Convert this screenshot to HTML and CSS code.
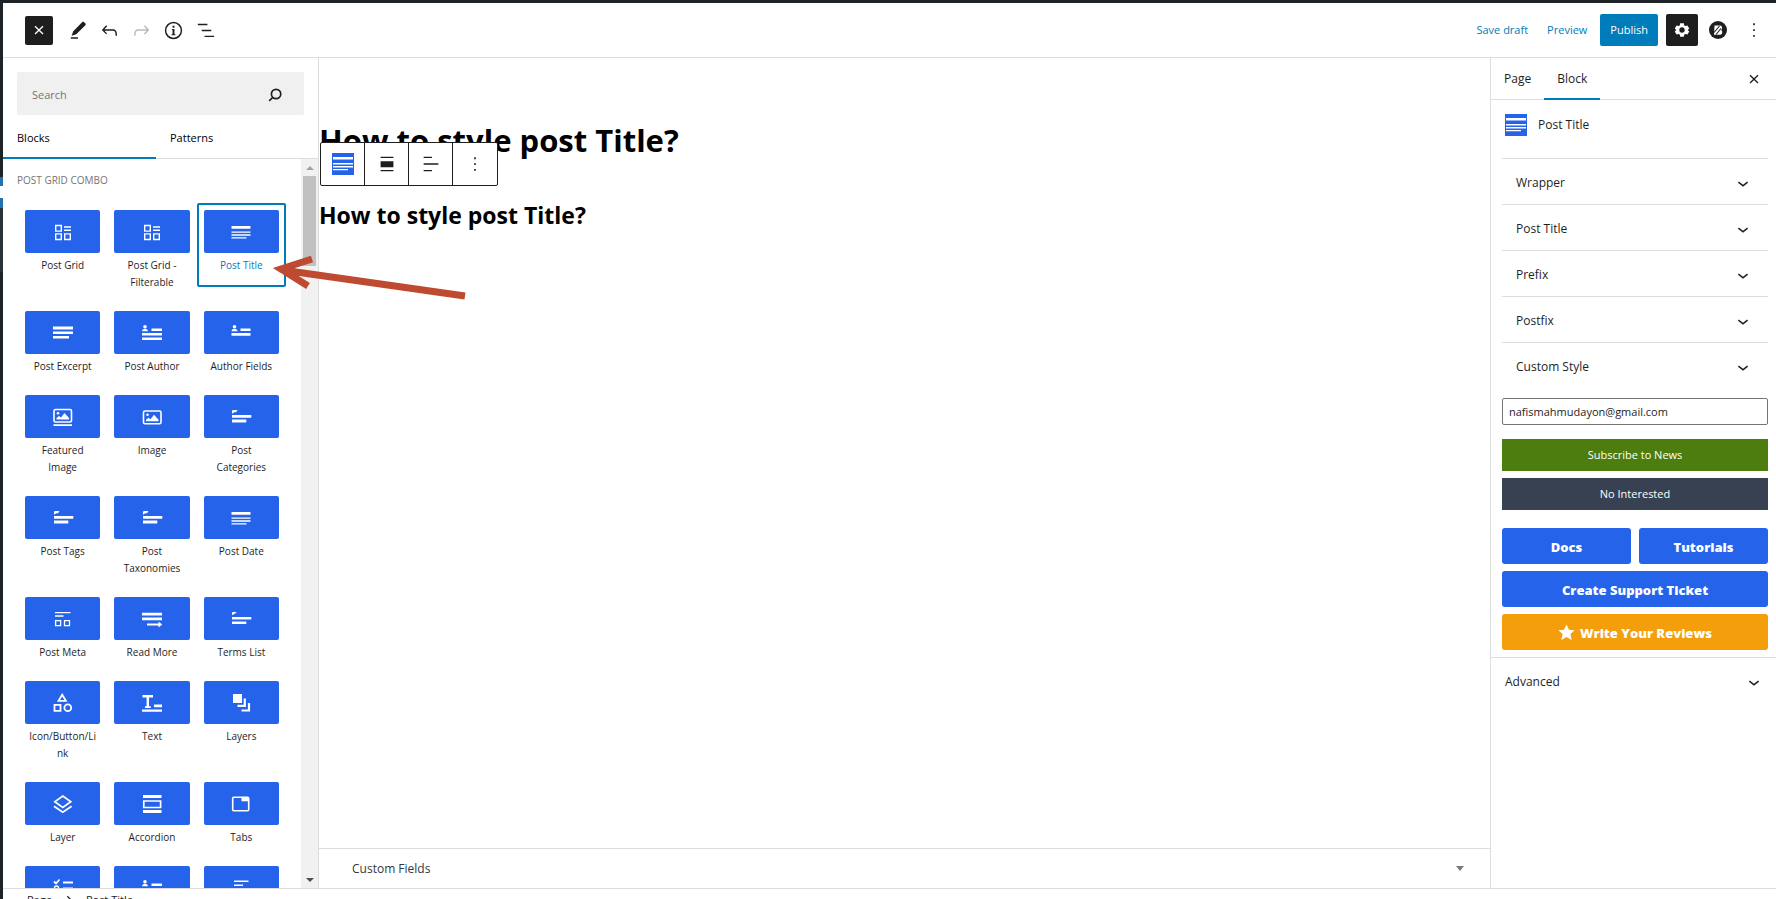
FILE: index.html
```html
<!DOCTYPE html>
<html lang="en">
<head>
<meta charset="utf-8">
<title>Edit Page</title>
<link rel="stylesheet" href="styles.css">
</head>
<body>
<svg class="defs" aria-hidden="true">
  <symbol id="post-grid" viewBox="0 0 24 24"><g fill="none" stroke="currentColor" stroke-width="1.4"><path d="M4.7 5.5h5.6v5.6H4.7zM4.7 13.900h5.6v5.6H4.7zM13.700 13.900h5.6v5.6h-5.6zM13 7h7M13 10.300h7"/></g></symbol>
  <symbol id="post-title" viewBox="0 0 24 24"><path fill="currentColor" d="M2.500 6h19v2.700h-19zM2.500 11.500h19v1.300h-19zM2.500 14.300h19v1.400h-19zM2.500 17.300h15v1.200h-15z"/></symbol>
  <symbol id="title-chip" viewBox="0 0 22 22"><path fill="currentColor" d="M1 4h20v2.500H1zM1 10h20v1.500H1zM1 13h20v1.500H1zM1 16h15v1.200H1z"/></symbol>
  <symbol id="lines" viewBox="0 0 24 24"><path fill="currentColor" d="M2 5.500h20v3H2zM2 10.500h20V13H2zM2 15h16v2.600H2z"/></symbol>
  <symbol id="author" viewBox="0 0 24 24"><circle cx="5" cy="5.700" r="1.800" fill="currentColor"/><path fill="currentColor" d="M2 10.300q.2-2.600 3-2.600t3 2.600zM11.500 7.500H22V10H11.500zM2 12h20v2.400H2zM2 16.500h20V19H2z"/></symbol>
  <symbol id="fields" viewBox="0 0 24 24"><circle cx="5.500" cy="5.700" r="1.800" fill="currentColor"/><path fill="currentColor" d="M2.500 10.300q.2-2.600 3-2.600t3 2.600zM11.500 7.500h10V10h-10zM2.500 12h19v2.800h-19z"/></symbol>
  <symbol id="featured" viewBox="0 0 24 24"><rect x="3" y="4.500" width="17.500" height="12.500" rx="1.500" fill="none" stroke="currentColor" stroke-width="1.600"/><circle cx="7" cy="8.300" r="1.300" fill="currentColor"/><path fill="currentColor" d="M5.500 14.500v-1.500l2.500-2 2 1.500 3.500-4.500 4.500 5v1.500zM2.500 19.200H21V21H2.500z"/></symbol>
  <symbol id="image" viewBox="0 0 24 24"><rect x="3.500" y="6" width="17.500" height="12.800" rx="1.500" fill="none" stroke="currentColor" stroke-width="1.600"/><circle cx="7.500" cy="9.800" r="1.300" fill="currentColor"/><path fill="currentColor" d="M6 16.200v-1.500l2.500-2 2 1.500L14 9.700l4.500 5v1.500z"/></symbol>
  <symbol id="terms" viewBox="0 0 24 24"><path fill="currentColor" d="M3 8.800V5.500L4.500 5H8.500L7 7.200H5.300zM3 10h19.300v2.800H3zM3 14.600h14.300v2.800H3z"/></symbol>
  <symbol id="terms-list" viewBox="0 0 24 24"><path fill="currentColor" d="M3 5.500l2-.8 3 1-2.500 1L3 8.300zM3 10h19.300v2.600H3zM3 14.500h14.300V17H3z"/></symbol>
  <symbol id="meta" viewBox="0 0 24 24"><path fill="none" stroke="currentColor" stroke-width="1.300" d="M4 5.700h15.500M4 9h8.500M4.600 13.700h5v5h-5zM13.500 13.700h5v5h-5z"/></symbol>
  <symbol id="read-more" viewBox="0 0 24 24"><path fill="currentColor" d="M2 5.800h20v2.700H2zM2 10.600h20v2.600H2zM7 16.500h11.500v-2l3.700 3-3.700 3v-2H7z"/></symbol>
  <symbol id="shapes" viewBox="0 0 24 24"><path fill="none" stroke="currentColor" stroke-width="1.800" d="M11.200 3.800l3.700 6H7.500zM3.500 13.800h6v6h-6z"/><circle cx="16.800" cy="16.800" r="3.400" fill="none" stroke="currentColor" stroke-width="1.800"/></symbol>
  <symbol id="text" viewBox="0 0 24 24"><path fill="currentColor" d="M2.500 4h10.500v2.500H9v8.800h1.800V17H5v-1.700h1.600V6.500H2.500zM14 13.500h8v2.700h-8zM2 18.500h20v2.300H2z"/></symbol>
  <symbol id="layers" viewBox="0 0 24 24"><path fill="currentColor" d="M4 3h9v9H4z"/><path fill="none" stroke="currentColor" stroke-width="2.200" d="M15.800 7.500v7.300H8.500M20 12v7.500h-7.500"/></symbol>
  <symbol id="layer" viewBox="0 0 24 24"><path fill="none" stroke="currentColor" stroke-width="1.700" d="M11.800 4l8 5.700-8 5.700-8-5.700zM3 14.200l8.800 6 8.800-6"/></symbol>
  <symbol id="accordion" viewBox="0 0 24 24"><path fill="currentColor" d="M3 3h18.500v3H3zM3 18h18.500v3H3z"/><path fill="none" stroke="currentColor" stroke-width="1.700" d="M3.800 9h16.800v6.500H3.800z"/></symbol>
  <symbol id="tabs" viewBox="0 0 24 24"><rect x="3.700" y="5.300" width="16" height="13.500" rx="1" fill="none" stroke="currentColor" stroke-width="1.600"/><path fill="currentColor" d="M12.500 5h7v4.300h-7z"/></symbol>
  <symbol id="checks" viewBox="0 0 24 24"><path fill="none" stroke="currentColor" stroke-width="1.800" d="M3 5.500l2 2L8.500 3.500M12 6.500h10M12 12.500h10"/><circle cx="5.500" cy="12" r="2" fill="none" stroke="currentColor" stroke-width="1.500"/></symbol>
  <symbol id="short-lines" viewBox="0 0 24 24"><path fill="currentColor" d="M5 4.500h14.500V6H5zM5 8.500h9V10H5z"/></symbol>
  <symbol id="chevron" viewBox="0 0 24 24"><path fill="currentColor" d="M17.500 11.600L12 16l-5.500-4.400.9-1.200L12 14l4.500-3.600z"/></symbol>
  <symbol id="close" viewBox="0 0 24 24"><path fill="none" stroke="currentColor" stroke-width="2" d="M6 6.500l12 11.500M18 6.500L6 18"/></symbol>
  <symbol id="more" viewBox="0 0 24 24"><path fill="currentColor" d="M11 4h2v2.200h-2zM11 11h2v2.200h-2zM11 18h2v2.200h-2z"/></symbol>
</svg>
<div class="screen">
  <div class="admin-edge"><span class="edge-current"></span><span class="edge-sub"></span></div>
  <div class="editor">
    <header class="topbar">
      <div class="tools">
        <button class="close-inserter" aria-label="Close inserter"><svg><use href="#close"/></svg></button>
        <button class="tool" aria-label="Edit"><svg viewBox="0 0 24 24"><path fill="currentColor" d="M20.300 4.800l-1.700-1.600c-.5-.5-1.300-.4-1.800.1L7.600 12.700 5.800 17.500l4.900-1.700 9.500-9.200c.5-.5.600-1.300.1-1.800zM5 19h7.500v1.500H5z"/></svg></button>
        <button class="tool" aria-label="Undo"><svg viewBox="0 0 24 24"><path fill="currentColor" d="M18.300 11.700c-.6-.6-1.400-.9-2.300-.9H6.700l2.900-3.300-1.100-1-4.500 5L8.500 16l1-1-2.700-2.700H16c.5 0 .9.200 1.300.5 1 1 1 3.400 1 4.500v.3h1.500v-.2c0-1.500 0-4.300-1.500-5.700z"/></svg></button>
        <button class="tool muted" aria-label="Redo" disabled><svg viewBox="0 0 24 24"><path fill="currentColor" d="M15.600 6.500l-1.100 1 2.900 3.300H8c-.9 0-1.700.3-2.300.9-1.400 1.500-1.400 4.200-1.400 5.600v.2h1.500v-.3c0-1.100 0-3.500 1-4.500.3-.3.700-.5 1.300-.5h9.200L14.500 15l1.100 1.100 4.600-4.600-4.600-5z"/></svg></button>
        <button class="tool" aria-label="Details"><svg viewBox="0 0 24 24"><circle cx="12" cy="12" r="8.300" fill="none" stroke="currentColor" stroke-width="1.500"/><path fill="currentColor" d="M11 7h2v2h-2zM10.300 10.500H13V16h1v1h-4v-1h1v-4.400h-.7z"/></svg></button>
        <button class="tool" aria-label="List view"><svg viewBox="0 0 24 24"><path fill="currentColor" d="M4 5h10v1.500H4zM8 11.200h10v1.500H8zM11 17.400h10v1.500H11z"/></svg></button>
      </div>
      <div class="actions">
        <button class="link-btn">Save draft</button>
        <button class="link-btn">Preview</button>
        <button class="publish">Publish</button>
        <button class="settings" aria-label="Settings"><svg viewBox="0 0 24 24"><path fill="currentColor" fill-rule="evenodd" d="M9.800 4h4.400l.5 2.500 1.400.8 2.400-.8 2.200 3.800-1.900 1.700 1.900 1.700-2.200 3.800-2.400-.8-1.400.8-.5 2.500H9.800l-.5-2.500-1.400-.8-2.400.8-2.200-3.800L5.200 12l-1.900-1.700 2.200-3.800 2.400.8 1.400-.8zM12 8.800a3.200 3.200 0 100 6.400 3.200 3.200 0 000-6.400z"/></svg></button>
        <button class="plugin" aria-label="Plugin settings"><svg viewBox="0 0 18 18"><circle cx="9" cy="9" r="9" fill="#1e1e1e"/><path fill="#fff" d="M5.500 4.500h5.500q2 0 2 2v1L12.300 9l.9 1.500v1.200q0 2-2.200 2H5z"/><path fill="none" stroke="#1e1e1e" stroke-width="1.100" d="M5 11.500L10.500 5M7 13.500l5-6"/></svg></button>
        <button class="options" aria-label="Options"><svg><use href="#more"/></svg></button>
      </div>
    </header>
    <div class="body">
      <aside class="inserter">
        <div class="search">
          <input type="search" placeholder="Search" aria-label="Search">
          <svg viewBox="0 0 24 24"><path fill="none" stroke="#1e1e1e" stroke-width="2" d="M9.500 14.700L5 19"/><circle cx="13.300" cy="10.800" r="5.600" fill="none" stroke="#1e1e1e" stroke-width="2"/></svg>
        </div>
        <div class="tabs" role="tablist">
          <button class="tab active" role="tab">Blocks</button>
          <button class="tab" role="tab">Patterns</button>
        </div>
        <div class="list">
          <div class="blocks">
            <h2 class="group">POST GRID COMBO</h2>
            <div class="grid">
              <button class="block"><span class="tile"><svg><use href="#post-grid"/></svg></span><span class="label">Post Grid</span></button>
              <button class="block"><span class="tile"><svg><use href="#post-grid"/></svg></span><span class="label">Post Grid - Filterable</span></button>
              <button class="block selected"><span class="tile"><svg><use href="#post-title"/></svg></span><span class="label">Post Title</span></button>
              <button class="block"><span class="tile"><svg><use href="#lines"/></svg></span><span class="label">Post Excerpt</span></button>
              <button class="block"><span class="tile"><svg><use href="#author"/></svg></span><span class="label">Post Author</span></button>
              <button class="block"><span class="tile"><svg><use href="#fields"/></svg></span><span class="label">Author Fields</span></button>
              <button class="block"><span class="tile"><svg><use href="#featured"/></svg></span><span class="label">Featured Image</span></button>
              <button class="block"><span class="tile"><svg><use href="#image"/></svg></span><span class="label">Image</span></button>
              <button class="block"><span class="tile"><svg><use href="#terms"/></svg></span><span class="label">Post Categories</span></button>
              <button class="block"><span class="tile"><svg><use href="#terms"/></svg></span><span class="label">Post Tags</span></button>
              <button class="block"><span class="tile"><svg><use href="#terms"/></svg></span><span class="label">Post Taxonomies</span></button>
              <button class="block"><span class="tile"><svg><use href="#post-title"/></svg></span><span class="label">Post Date</span></button>
              <button class="block"><span class="tile"><svg><use href="#meta"/></svg></span><span class="label">Post Meta</span></button>
              <button class="block"><span class="tile"><svg><use href="#read-more"/></svg></span><span class="label">Read More</span></button>
              <button class="block"><span class="tile"><svg><use href="#terms-list"/></svg></span><span class="label">Terms List</span></button>
              <button class="block"><span class="tile"><svg><use href="#shapes"/></svg></span><span class="label">Icon/Button/Link</span></button>
              <button class="block"><span class="tile"><svg><use href="#text"/></svg></span><span class="label">Text</span></button>
              <button class="block"><span class="tile"><svg><use href="#layers"/></svg></span><span class="label">Layers</span></button>
              <button class="block"><span class="tile"><svg><use href="#layer"/></svg></span><span class="label">Layer</span></button>
              <button class="block"><span class="tile"><svg><use href="#accordion"/></svg></span><span class="label">Accordion</span></button>
              <button class="block"><span class="tile"><svg><use href="#tabs"/></svg></span><span class="label">Tabs</span></button>
              <button class="block" aria-label="Checklist"><span class="tile"><svg><use href="#checks"/></svg></span></button>
              <button class="block" aria-label="Author list"><span class="tile"><svg><use href="#author"/></svg></span></button>
              <button class="block" aria-label="Lines"><span class="tile"><svg><use href="#short-lines"/></svg></span></button>
            </div>
          </div>
          <div class="scrollbar"><span class="arrow up"></span><span class="thumb"></span><span class="arrow down"></span></div>
        </div>
      </aside>
      <main class="canvas">
        <div class="content">
          <h1 class="page-title">How to style post Title?</h1>
          <h2 class="post-title">How to style post Title?</h2>
          <div class="block-toolbar">
            <button aria-label="Post Title"><svg class="chip"><use href="#title-chip"/></svg></button>
            <button aria-label="Align"><svg viewBox="0 0 24 24"><path fill="currentColor" d="M5 4h14v1.500H5zM5 9h14v6.500H5zM5 18.500h14V20H5z"/></svg></button>
            <button aria-label="Align text"><svg viewBox="0 0 24 24"><path fill="currentColor" d="M4 4h9v1.500H4zM4 11.200h16v1.600H4zM4 18.500h9V20H4z"/></svg></button>
            <button aria-label="Options"><svg><use href="#more"/></svg></button>
          </div>
        </div>
        <button class="custom-fields"><span>Custom Fields</span><span class="arrow down grey"></span></button>
      </main>
      <aside class="sidebar">
        <div class="side-tabs">
          <button class="side-tab">Page</button>
          <button class="side-tab active">Block</button>
          <button class="side-close" aria-label="Close settings"><svg><use href="#close"/></svg></button>
        </div>
        <div class="card"><svg class="chip"><use href="#title-chip"/></svg><span>Post Title</span></div>
        <div class="panels">
          <button class="panel">Wrapper<svg><use href="#chevron"/></svg></button>
          <button class="panel">Post Title<svg><use href="#chevron"/></svg></button>
          <button class="panel">Prefix<svg><use href="#chevron"/></svg></button>
          <button class="panel">Postfix<svg><use href="#chevron"/></svg></button>
          <button class="panel">Custom Style<svg><use href="#chevron"/></svg></button>
          <input class="email" type="email" value="nafismahmudayon@gmail.com" aria-label="Email">
          <button class="flat green">Subscribe to News</button>
          <button class="flat slate">No Interested</button>
          <div class="links">
            <a href="#" class="cta">Docs</a>
            <a href="#" class="cta">Tutorials</a>
            <a href="#" class="cta wide">Create Support Ticket</a>
            <a href="#" class="cta wide amber"><svg viewBox="0 0 20 20"><path fill="currentColor" d="M10 .5l2.900 6.200 6.700.7-5 4.500 1.500 6.800L10 15.300l-6.100 3.400 1.500-6.800-5-4.500 6.700-.7z"/></svg>Write Your Reviews</a>
          </div>
        </div>
        <button class="advanced">Advanced<svg><use href="#chevron"/></svg></button>
      </aside>
    </div>
    <footer class="crumbs"><span>Page</span><svg viewBox="0 0 12 12"><path fill="none" stroke="currentColor" stroke-width="1.500" d="M4 1.500L8.500 6 4 10.500"/></svg><span>Post Title</span></footer>
  </div>
  <svg class="pointer" viewBox="0 0 200 50" aria-hidden="true"><path fill="none" stroke="#bd4a31" stroke-width="7" d="M193 42L10 16M40 5L9 15l27 17"/></svg>
</div>
</body>
</html>
```

FILE: styles.css
```css
* { box-sizing: border-box; }
body {
  margin: 0;
  font-family: "Open Sans", "Noto Sans", sans-serif;
  font-size: 12px;
  line-height: 16px;
  color: #1e1e1e;
}
button, input {
  font: inherit;
  color: inherit;
  background: none;
  border: 0;
  padding: 0;
  margin: 0;
}
button { cursor: pointer; }
svg { display: block; flex: none; width: 24px; height: 24px; }
.defs { display: none; }

.screen {
  position: relative;
  display: flex;
  height: 100vh;
  overflow: hidden;
  background: #fff;
  border-top: 3px solid #1d2327;
}
.admin-edge { width: 3px; flex: none; background: #1d2327; padding-top: 174px; }
.edge-current { display: block; height: 31px; background: linear-gradient(#2271b1 9px, #fff 9px, #fff 21px, #2271b1 21px); }
.edge-sub { display: block; height: 64px; background: #2c3338; }
.editor { flex: 1; min-width: 0; display: flex; flex-direction: column; }

.topbar {
  flex: none;
  height: 55px;
  display: flex;
  justify-content: space-between;
  align-items: center;
  padding: 0 6px 0 22px;
  border-bottom: 1px solid #ddd;
}
.tools, .actions { display: flex; align-items: center; }
.actions { font-size: 11px; }
.close-inserter {
  width: 28px;
  height: 29px;
  margin-right: 8px;
  display: grid;
  place-items: center;
  background: #1e1e1e;
  color: #fff;
  border-radius: 2px;
}
.close-inserter svg { width: 16px; height: 16px; }
.tool { width: 32px; height: 32px; display: grid; place-items: center; }
.tool svg { width: 23px; height: 23px; }
.muted { color: #bbb; }
.link-btn { color: #007cba; margin-right: 19px; }
.publish {
  height: 32px;
  padding: 0 10px;
  margin: 0 8px 0 -6px;
  background: #007cba;
  color: #fff;
  border-radius: 2px;
}
.settings {
  width: 32px;
  height: 32px;
  display: grid;
  place-items: center;
  background: #1e1e1e;
  color: #fff;
  border-radius: 2px;
}
.settings svg { width: 20px; height: 20px; }
.plugin { width: 40px; display: grid; place-items: center; }
.plugin svg { width: 18px; height: 18px; }
.options { width: 32px; display: grid; place-items: center; }
.options svg { width: 20px; height: 20px; }

.body { flex: 1; min-height: 0; display: flex; }

.inserter {
  width: 316px;
  flex: none;
  display: flex;
  flex-direction: column;
  border-right: 1px solid #ddd;
}
.search {
  margin: 14px 14px 0;
  height: 43px;
  padding: 2px 19px 0 15px;
  display: flex;
  align-items: center;
  background: #f0f0f0;
  border-radius: 2px;
  font-size: 11px;
}
.search input { flex: 1; min-width: 0; outline: 0; }
.search input::placeholder { color: #757575; opacity: 1; }
.search svg { width: 20px; height: 20px; }
.tabs { flex: none; display: flex; height: 44px; border-bottom: 1px solid #ddd; }
.tab { width: 153px; padding: 3px 14px 0; margin-bottom: -1px; text-align: left; font-size: 11px; font-weight: 500; color: #000; }
.tab.active, .side-tab.active { border-bottom: 2px solid #007cba; }
.tab:not(.active), .side-tab:not(.active) { border-bottom: 2px solid transparent; }
.list { flex: 1; min-height: 0; display: flex; overflow: hidden; }
.blocks { flex: 1; min-width: 0; padding: 13px 15px 0; }
.group { margin: 0 0 15px -1px; font-size: 10px; line-height: 16px; font-weight: 500; color: #757575; }
.grid { display: grid; grid-template-columns: repeat(3, 1fr); align-items: start; }
.block { padding: 7px 7px 13px; display: block; border-radius: 2px; }
.block.selected { box-shadow: inset 0 0 0 2px #007cba; color: #007cba; }
.tile {
  height: 43px;
  display: grid;
  place-items: center;
  background: #2563eb;
  color: #fff;
  border-radius: 2px;
}
.label { display: block; padding: 4px 3px 0; font-size: 10px; line-height: 17px; overflow-wrap: anywhere; }
.scrollbar {
  width: 17px;
  flex: none;
  display: flex;
  flex-direction: column;
  align-items: center;
  background: #f1f1f1;
  padding: 7px 0 6px;
}
.thumb { width: 13px; height: 90px; margin: 6px 0 auto; background: #c1c1c1; }
.arrow { border: 4px solid transparent; }
.arrow.up { border-top: 0; border-bottom-color: #a3a3a3; }
.arrow.down { border-bottom: 0; border-top-color: #505050; }

.canvas { flex: 1; min-width: 0; display: flex; flex-direction: column; color: #000; }
.content { flex: 1; position: relative; padding-top: 60px; }
.page-title { margin: 0 0 37px; font-size: 31px; line-height: 44px; font-weight: 700; }
.post-title { margin: 0; font-size: 23px; line-height: 32px; font-weight: 700; }
.block-toolbar {
  position: absolute;
  top: 84px;
  left: 1px;
  display: flex;
  height: 44px;
  background: #fff;
  border: 1px solid #1e1e1e;
  border-radius: 2px;
}
.block-toolbar button { width: 44px; display: grid; place-items: center; color: #1e1e1e; }
.block-toolbar button:first-child { width: 43px; }
.block-toolbar button:last-child { width: 45px; }
.block-toolbar button + button { border-left: 1px solid #1e1e1e; }
.block-toolbar svg { width: 22px; height: 22px; }
.block-toolbar button:last-child svg { width: 20px; height: 20px; }
.chip { width: 22px; height: 22px; background: #2563eb; color: #fff; }
.custom-fields {
  height: 40px;
  display: flex;
  align-items: center;
  justify-content: space-between;
  padding: 0 26px 0 33px;
  border-top: 1px solid #ddd;
  color: #32373c;
}
.arrow.grey { border-top-color: #787c82; border-top-width: 5px; }

.sidebar { width: 286px; flex: none; border-left: 1px solid #ddd; }
.side-tabs { display: flex; height: 42px; border-bottom: 1px solid #ddd; }
.side-tab { padding: 2px 13px 0; margin-bottom: -1px; font-weight: 500; }
.side-close { margin: 0 14px 0 auto; }
.side-close svg { width: 16px; height: 16px; }
.panel svg, .advanced svg { width: 22px; height: 22px; }
.card { display: flex; gap: 11px; align-items: center; padding: 14px 14px 22px; }
.panels { padding: 0 8px 7px 11px; }
.panel {
  width: 100%;
  height: 46px;
  padding: 2px 14px 0 14px;
  display: flex;
  align-items: center;
  justify-content: space-between;
  border-top: 1px solid #ddd;
  font-weight: 500;
}
.email {
  width: 100%;
  height: 27px;
  margin: 10px 0 14px;
  padding: 0 6px;
  border: 1px solid #757575;
  border-radius: 2px;
  font-size: 11px;
}
.flat { display: block; width: 100%; height: 32px; color: #fff; font-size: 11px; }
.green { background: #4d7c0f; }
.slate { background: #374151; margin-top: 7px; }
.links { display: grid; grid-template-columns: 1fr 1fr; gap: 7px 8px; margin-top: 18px; }
.cta {
  height: 36px;
  padding-top: 1px;
  display: flex;
  align-items: center;
  justify-content: center;
  gap: 5px;
  background: #2563eb;
  color: #fff;
  border-radius: 3px;
  font-size: 13px;
  font-weight: 800;
  text-decoration: none;
}
.cta svg { width: 17px; height: 17px; }
.wide { grid-column: 1 / -1; }
.amber { background: #f59e0b; }
.advanced {
  width: 100%;
  height: 48px;
  padding: 0 11px 0 14px;
  display: flex;
  align-items: center;
  justify-content: space-between;
  border-top: 1px solid #ddd;
  font-weight: 500;
}

.crumbs {
  flex: none;
  height: 11px;
  padding: 3px 24px 0;
  display: flex;
  align-items: flex-start;
  gap: 12px;
  border-top: 1px solid #ddd;
  font-size: 11px;
}
.crumbs svg { width: 10px; height: 10px; margin-top: 3px; }

.pointer { position: absolute; left: 272px; top: 251px; width: 200px; height: 50px; }
```
